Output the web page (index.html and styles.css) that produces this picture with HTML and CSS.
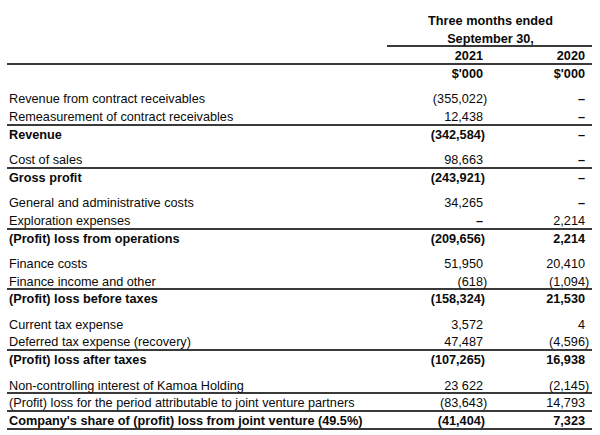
FILE: index.html
```html
<!DOCTYPE html>
<html lang="en">
<head>
<meta charset="utf-8">
<title>Statement</title>
<link rel="stylesheet" href="styles.css">
</head>
<body>
<div class="stmt">
  <div class="row head">
    <div class="label"></div>
    <div class="span2">Three months ended</div>
  </div>
  <div class="row head">
    <div class="label"></div>
    <div class="span2 rule">September 30,</div>
  </div>
  <div class="row head rule">
    <div class="label"></div>
    <div class="num">2021</div>
    <div class="num">2020</div>
  </div>
  <div class="row head">
    <div class="label"></div>
    <div class="num">$'000</div>
    <div class="num">$'000</div>
  </div>

  <div class="group">
    <div class="row">
      <div class="label">Revenue from contract receivables</div>
      <div class="num">(355,022<span class="hang">)</span></div>
      <div class="num"><span class="dash">–</span></div>
    </div>
    <div class="row rule">
      <div class="label">Remeasurement of contract receivables</div>
      <div class="num">12,438</div>
      <div class="num"><span class="dash">–</span></div>
    </div>
    <div class="row total">
      <div class="label">Revenue</div>
      <div class="num">(342,584<span class="hang">)</span></div>
      <div class="num"><span class="dash">–</span></div>
    </div>
  </div>

  <div class="group">
    <div class="row rule">
      <div class="label">Cost of sales</div>
      <div class="num">98,663</div>
      <div class="num"><span class="dash">–</span></div>
    </div>
    <div class="row total">
      <div class="label">Gross profit</div>
      <div class="num">(243,921<span class="hang">)</span></div>
      <div class="num"><span class="dash">–</span></div>
    </div>
  </div>

  <div class="group">
    <div class="row">
      <div class="label">General and administrative costs</div>
      <div class="num">34,265</div>
      <div class="num"><span class="dash">–</span></div>
    </div>
    <div class="row rule">
      <div class="label">Exploration expenses</div>
      <div class="num"><span class="dash">–</span></div>
      <div class="num">2,214</div>
    </div>
    <div class="row total">
      <div class="label">(Profit) loss from operations</div>
      <div class="num">(209,656<span class="hang">)</span></div>
      <div class="num">2,214</div>
    </div>
  </div>

  <div class="group">
    <div class="row">
      <div class="label">Finance costs</div>
      <div class="num">51,950</div>
      <div class="num">20,410</div>
    </div>
    <div class="row rule">
      <div class="label">Finance income and other</div>
      <div class="num">(618<span class="hang">)</span></div>
      <div class="num">(1,094<span class="hang">)</span></div>
    </div>
    <div class="row total">
      <div class="label">(Profit) loss before taxes</div>
      <div class="num">(158,324<span class="hang">)</span></div>
      <div class="num">21,530</div>
    </div>
  </div>

  <div class="group">
    <div class="row">
      <div class="label">Current tax expense</div>
      <div class="num">3,572</div>
      <div class="num">4</div>
    </div>
    <div class="row rule">
      <div class="label">Deferred tax expense (recovery)</div>
      <div class="num">47,487</div>
      <div class="num">(4,596<span class="hang">)</span></div>
    </div>
    <div class="row total">
      <div class="label">(Profit) loss after taxes</div>
      <div class="num">(107,265<span class="hang">)</span></div>
      <div class="num">16,938</div>
    </div>
  </div>

  <div class="group">
    <div class="row rule">
      <div class="label">Non-controlling interest of Kamoa Holding</div>
      <div class="num">23 622</div>
      <div class="num">(2,145<span class="hang">)</span></div>
    </div>
    <div class="row rule">
      <div class="label">(Profit) loss for the period attributable to joint venture partners</div>
      <div class="num">(83,643<span class="hang">)</span></div>
      <div class="num">14,793</div>
    </div>
    <div class="row total rule">
      <div class="label">Company's share of (profit) loss from joint venture (49.5%)</div>
      <div class="num">(41,404<span class="hang">)</span></div>
      <div class="num">7,323</div>
    </div>
  </div>
</div>
</body>
</html>
```

FILE: styles.css
```css
html, body {
  margin: 0;
  padding: 0;
  background: #ffffff;
}

body {
  font-family: "Liberation Sans", Arial, sans-serif;
  font-size: 12.7px;
  color: #0a0a0a;
}

.stmt {
  width: 585px;
  margin-left: 7px;
  padding-top: 12px;
}

.row {
  display: flex;
  height: 17.7px;
  line-height: 17.7px;
  padding-top: 1px;
  box-sizing: border-box;
  white-space: nowrap;
}

.row.rule {
  border-bottom: 2px solid #3a3a3a;
}

.label {
  flex: 1 1 auto;
  padding-left: 2px;
  overflow: visible;
}

.num {
  flex: 0 0 auto;
  box-sizing: border-box;
  text-align: right;
  padding-right: 7px;
}

.num:nth-child(2) {
  width: 103px;
}

.num:nth-child(3) {
  width: 102px;
}

.span2 {
  flex: 0 0 205px;
  width: 205px;
  height: 16.7px;
  box-sizing: border-box;
  text-align: center;
  padding-left: 2px;
}

.span2.rule {
  border-bottom: 2px solid #3a3a3a;
}

.head {
  font-weight: bold;
}

.total {
  font-weight: bold;
}

.hang {
  margin-right: -4.2px;
}

.total .hang {
  margin-right: -2px;
}

.dash {
  font-weight: bold;
}

.group {
  margin-top: 7.7px;
}

.group:first-of-type {
  margin-top: 7.4px;
}
```
